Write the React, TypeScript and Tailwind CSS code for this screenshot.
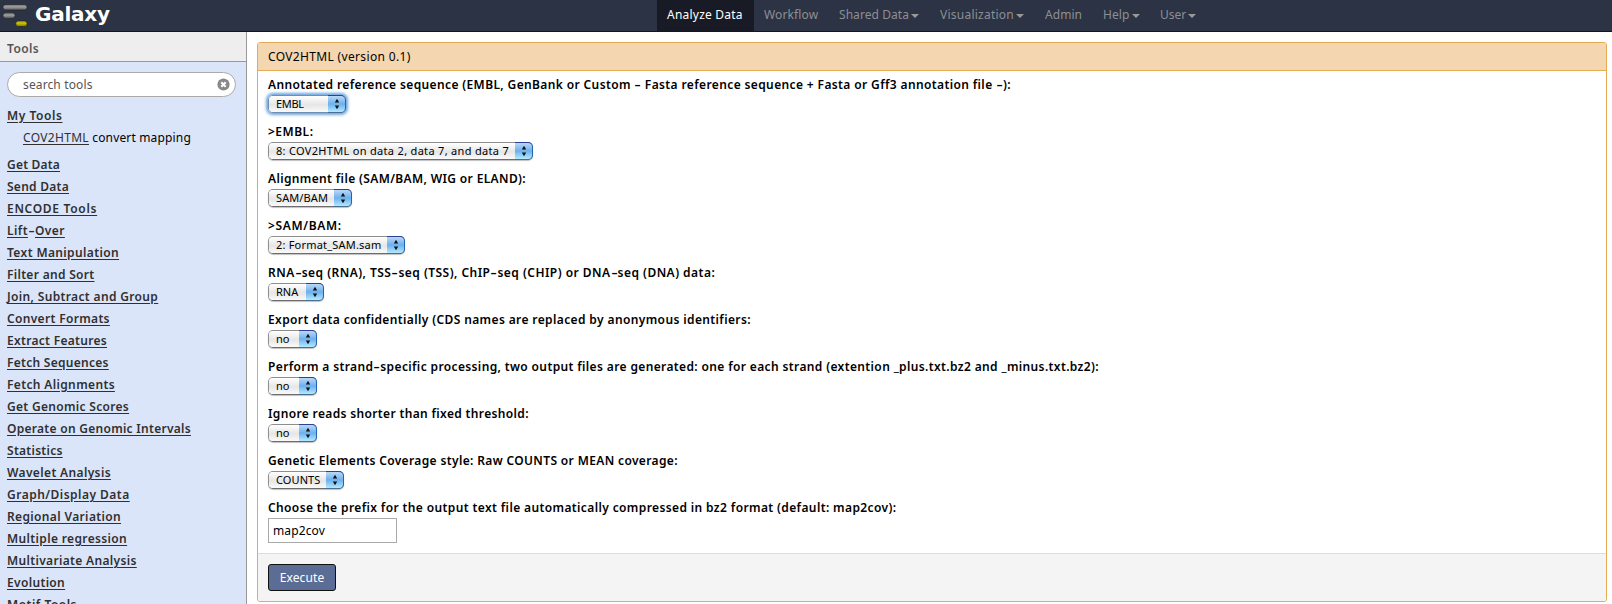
import React from "react";

const tools: [string, string][] = [
  ["Get Data", "tracking-[0.2px]"],
  ["Send Data", "tracking-[0.27px]"],
  ["ENCODE Tools", "tracking-[0.7px]"],
  ["Lift-Over", "tracking-[0.42px]"],
  ["Text Manipulation", "tracking-[0.38px]"],
  ["Filter and Sort", "tracking-[0.31px]"],
  ["Join, Subtract and Group", "tracking-[0.35px]"],
  ["Convert Formats", "tracking-[0.33px]"],
  ["Extract Features", "tracking-[0.3px]"],
  ["Fetch Sequences", "tracking-[0.28px]"],
  ["Fetch Alignments", "tracking-[0.36px]"],
  ["Get Genomic Scores", "tracking-[0.31px]"],
  ["Operate on Genomic Intervals", "tracking-[0.28px]"],
  ["Statistics", "tracking-[0.28px]"],
  ["Wavelet Analysis", "tracking-[0.36px]"],
  ["Graph/Display Data", "tracking-[0.48px]"],
  ["Regional Variation", "tracking-[0.36px]"],
  ["Multiple regression", "tracking-[0.36px]"],
  ["Multivariate Analysis", "tracking-[0.34px]"],
  ["Evolution", "tracking-[0.34px]"],
  ["Motif Tools", "tracking-[0.5px]"],
];

type Field = { label: string; track: string; value: string; width: string; valueTrack: string; focused?: boolean };

const fields: Field[] = [
  { label: "Annotated reference sequence (EMBL, GenBank or Custom - Fasta reference sequence + Fasta or Gff3 annotation file -):", track: "tracking-[0.375px]", value: "EMBL", width: "w-[78px]", valueTrack: "tracking-[-0.35px]", focused: true },
  { label: ">EMBL:", track: "tracking-[0.5px]", value: "8: COV2HTML on data 2, data 7, and data 7", width: "w-[265px]", valueTrack: "tracking-[0.31px]" },
  { label: "Alignment file (SAM/BAM, WIG or ELAND):", track: "tracking-[0.36px]", value: "SAM/BAM", width: "w-[84px]", valueTrack: "tracking-[0.1px]" },
  { label: ">SAM/BAM:", track: "tracking-[0.65px]", value: "2: Format_SAM.sam", width: "w-[137px]", valueTrack: "tracking-[0.2px]" },
  { label: "RNA-seq (RNA), TSS-seq (TSS), ChIP-seq (CHIP) or DNA-seq (DNA) data:", track: "tracking-[0.47px]", value: "RNA", width: "w-[56px]", valueTrack: "tracking-[0px]" },
  { label: "Export data confidentially (CDS names are replaced by anonymous identifiers:", track: "tracking-[0.38px]", value: "no", width: "w-[49px]", valueTrack: "tracking-[-0.1px]" },
  { label: "Perform a strand-specific processing, two output files are generated: one for each strand (extention _plus.txt.bz2 and _minus.txt.bz2):", track: "tracking-[0.37px]", value: "no", width: "w-[49px]", valueTrack: "tracking-[-0.1px]" },
  { label: "Ignore reads shorter than fixed threshold:", track: "tracking-[0.35px]", value: "no", width: "w-[49px]", valueTrack: "tracking-[-0.1px]" },
  { label: "Genetic Elements Coverage style: Raw COUNTS or MEAN coverage:", track: "tracking-[0.36px]", value: "COUNTS", width: "w-[76px]", valueTrack: "tracking-[0.1px]" },
];

const nav: { label: string; width: string; track: string; menu?: boolean }[] = [
  { label: "Workflow", width: "w-[75px]", track: "tracking-[0.12px]" },
  { label: "Shared Data", width: "w-[101px]", track: "tracking-[0.06px]", menu: true },
  { label: "Visualization", width: "w-[105px]", track: "tracking-[0.24px]", menu: true },
  { label: "Admin", width: "w-[58px]", track: "tracking-[0.05px]" },
  { label: "Help", width: "w-[57px]", track: "tracking-[0.1px]", menu: true },
  { label: "User", width: "w-[50px]", track: "tracking-[0px]", menu: true },
];

/* Hyphens are drawn wide, as in Lucida Grande. */
function Dashed({ text }: { text: string }) {
  const parts = text.split("-");
  return (
    <>
      {parts.map((part, i) => (
        <React.Fragment key={i}>
          {i > 0 && <span className="inline-block w-[7px] origin-left translate-x-[0.5px] scale-x-[1.6]">-</span>}
          {part}
        </React.Fragment>
      ))}
    </>
  );
}

function PopUp({ field }: { field: Field }) {
  return (
    <div
      className={`${field.width} flex h-[18px] rounded-[5px] border ${
        field.focused
          ? "border-[#6d8db4] shadow-[0_0_3px_2px_#6fa5e0]"
          : "border-[#8e8e8e] border-b-[#6c6c6c] shadow-[0_1px_1px_rgba(0,0,0,0.25)]"
      }`}
    >
      <span className={`${field.valueTrack} h-4 flex-1 rounded-l-[4px] bg-linear-to-b from-white via-[#e6e6e6] via-55% to-[#fafafa] pl-[7px] text-[11px] leading-[15px] whitespace-nowrap text-black`}>
        {field.value}
      </span>
      <span className="-my-px -mr-px flex h-[18px] w-[18px] shrink-0 items-center justify-center rounded-r-[5px] border border-l-0 border-t-[#2b3f9b] border-r-[#2463b4] border-b-[#4b6d91] bg-linear-to-b from-[#b9d8f6] via-[#6cb0ee] via-50% to-[#b2eaff]">
        <svg className="-mt-px" width="6" height="12" viewBox="0 0 6 12" fill="#111">
          <path d="M3 0.8 5.2 4.6H0.8zM3 11.2 0.8 7.4h4.4z" />
        </svg>
      </span>
    </div>
  );
}

function Logo() {
  return (
    <svg width="28" height="28" viewBox="0 0 28 28">
      <defs>
        <linearGradient id="grey" x1="0" y1="0" x2="0" y2="1">
          <stop offset="0" stopColor="#6e6e6e" />
          <stop offset="0.4" stopColor="#a0a0a0" />
          <stop offset="1" stopColor="#555" />
        </linearGradient>
        <linearGradient id="gold" x1="0" y1="0" x2="0" y2="1">
          <stop offset="0" stopColor="#a59c00" />
          <stop offset="0.4" stopColor="#cfc400" />
          <stop offset="1" stopColor="#7a7300" />
        </linearGradient>
      </defs>
      <g stroke="#1e2226" strokeWidth="0.6">
        <rect x="3" y="4.5" width="24" height="5.6" rx="2.8" fill="url(#grey)" />
        <rect x="3" y="12.8" width="12" height="5.6" rx="2.8" fill="url(#grey)" />
        <rect x="15.8" y="20.9" width="11.2" height="5.6" rx="2.6" fill="url(#gold)" />
      </g>
    </svg>
  );
}

export default function App() {
  return (
    <div className="flex h-[604px] w-[1612px] flex-col overflow-hidden bg-white font-['Noto_Sans',sans-serif] text-[12px] text-black">
      <header className="flex h-8 shrink-0 border-b border-[#111620] bg-[#2b3344]">
        <div className="flex w-[657px]">
          <Logo />
          <span className="pl-[7px] font-['DejaVu_Sans',sans-serif] text-[20px] leading-[28px] font-bold tracking-[-0.25px] text-white">Galaxy</span>
        </div>
        <nav className="flex leading-[29px] text-[#8e8f94]">
          <span className="w-[97px] bg-[#181b25] pl-[10px] tracking-[0.22px] text-white">Analyze Data</span>
          <div className="flex items-start pl-[10px]">
            {nav.map((item) => (
              <span key={item.label} className={`${item.width} ${item.track} flex shrink-0 items-center whitespace-nowrap`}>
                {item.label}
                {item.menu && (
                  <svg className="mt-[3px] ml-[2px]" width="8" height="4" viewBox="0 0 8 4" fill="#999">
                    <path d="M0 0h8L4 4z" />
                  </svg>
                )}
              </span>
            ))}
          </div>
        </nav>
      </header>
      <div className="flex min-h-0 flex-1">
        <aside className="w-[247px] shrink-0 overflow-hidden border-r border-[#999] bg-[#dbe5fa]">
          <div className="h-[30px] border-b border-[#999] bg-[#eee] pl-[7px] leading-[33px] font-semibold tracking-[0.4px] text-[#555]">Tools</div>
          <div className="pt-[10px] pl-[7px]">
            <div className="flex h-[25px] w-[229px] items-center justify-between rounded-full border border-[#aaa] bg-white pr-[5px] pl-[15px] tracking-[0.13px] text-[#555]">
              <span>search tools</span>
              <svg width="13" height="13" viewBox="0 0 13 13">
                <circle cx="6.5" cy="6.5" r="6.1" fill="#888" />
                <path d="M4.3 4.3l4.4 4.4M8.7 4.3L4.3 8.7" stroke="#fff" strokeWidth="2.1" />
              </svg>
            </div>
            <div className="mt-2 h-[22px] leading-[22px] font-semibold tracking-[0.57px] text-[#303030]"><span className="underline underline-offset-2">My Tools</span></div>
            <div className="h-[22px] pl-4 leading-[22px]">
              <span className="tracking-[0.32px] text-[#303030] underline underline-offset-2">COV2HTML</span>
              <span className="tracking-[0.16px]"> convert mapping</span>
            </div>
            <div className="pt-[5px] font-semibold text-[#303030]">
              {tools.map(([name, track]) => (
                <div key={name} className={`${track} h-[22px] leading-[22px] whitespace-nowrap underline underline-offset-2`}>
                  <Dashed text={name} />
                </div>
              ))}
            </div>
          </div>
        </aside>
        <main className="flex-1 pt-[10px] pl-[10px]">
          <section className="flex h-[560px] w-[1350px] flex-col overflow-hidden rounded-[3px] border border-[#e5ab57]">
            <h1 className="h-[28px] shrink-0 border-b border-[#e5ab57] bg-[#f4d6b0] pl-[10px] leading-[28px] tracking-[0.34px]">COV2HTML (version 0.1)</h1>
            <div className="flex-1 pt-[4px] pl-[10px]">
              {fields.map((field) => (
                <div key={field.label} className="h-[47px]">
                  <div className={`${field.track} h-5 leading-[20px] font-semibold whitespace-nowrap`}>
                    <Dashed text={field.label} />
                  </div>
                  <PopUp field={field} />
                </div>
              ))}
              <div className="h-5 leading-[20px] font-semibold tracking-[0.38px] whitespace-nowrap">
                Choose the prefix for the output text file automatically compressed in bz2 format (default: map2cov):
              </div>
              <input className="block h-[25px] w-[129px] border border-[#aaa] bg-white pl-1 tracking-[0.13px] outline-none" defaultValue="map2cov" />
            </div>
            <footer className="h-[48px] shrink-0 border-t border-[#ddd] bg-[#f4f4f4] pt-[10px] pl-[10px]">
              <button className="block h-[27px] w-[68px] rounded-[3px] border border-[#111] bg-[#5b6d94] leading-[25px] tracking-[0.1px] text-white">Execute</button>
            </footer>
          </section>
        </main>
      </div>
    </div>
  );
}
